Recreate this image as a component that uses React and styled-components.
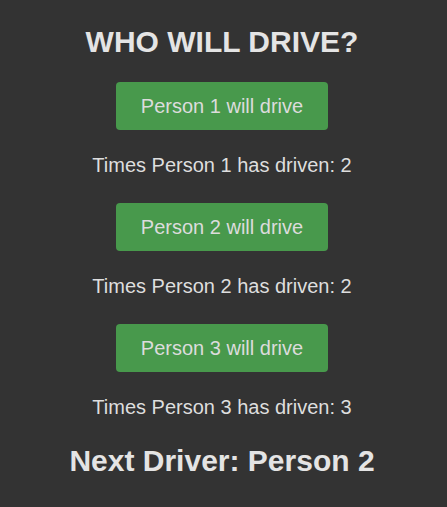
import React, { useState } from 'react';
import styled, { createGlobalStyle } from 'styled-components';

const GlobalStyle = createGlobalStyle`
  html, body {
    margin: 0;
    padding: 0;
    background: #333333;
  }
  body {
    font-family: "Liberation Sans", Arial, sans-serif;
    color: #e0e0e0;
  }
`;

const Page = styled.div`
  display: flex;
  flex-direction: column;
  align-items: center;
  padding: 22px 3px 0 0;
  min-height: 507px;
  box-sizing: border-box;
`;

const Title = styled.h1`
  font-size: 30px;
  font-weight: bold;
  margin: 0 0 20px;
  line-height: 40px;
  color: #e4e4e4;
`;

const DriverList = styled.div`
  display: flex;
  flex-direction: column;
  align-items: center;
  gap: 26px;
`;

const DriverBlock = styled.div`
  display: flex;
  flex-direction: column;
  align-items: center;
  gap: 24px;
`;

const DriveButton = styled.button`
  width: 212px;
  height: 48px;
  background: #48994c;
  color: #dcdcdc;
  border: none;
  border-radius: 4px;
  font-family: inherit;
  font-size: 20px;
  cursor: pointer;
`;

const Count = styled.p`
  font-size: 20px;
  line-height: 23px;
  margin: 0;
  color: #dedede;
`;

const NextDriver = styled.h2`
  font-size: 30px;
  font-weight: bold;
  margin: 25px 0 0;
  line-height: 34px;
  color: #e4e4e4;
`;

const App = () => {
  const [counts, setCounts] = useState([2, 2, 3]);
  const [next, setNext] = useState(2);

  const drive = (i) => {
    const updated = counts.map((c, j) => (j === i ? c + 1 : c));
    setCounts(updated);
    setNext(((i + 1) % counts.length) + 1);
  };

  return (
    <>
      <GlobalStyle />
      <Page>
        <Title>WHO WILL DRIVE?</Title>
        <DriverList>
          {counts.map((c, i) => (
            <DriverBlock key={i}>
              <DriveButton onClick={() => drive(i)}>Person {i + 1} will drive</DriveButton>
              <Count>Times Person {i + 1} has driven: {c}</Count>
            </DriverBlock>
          ))}
        </DriverList>
        <NextDriver>Next Driver: Person {next}</NextDriver>
      </Page>
    </>
  );
};

export default App;
